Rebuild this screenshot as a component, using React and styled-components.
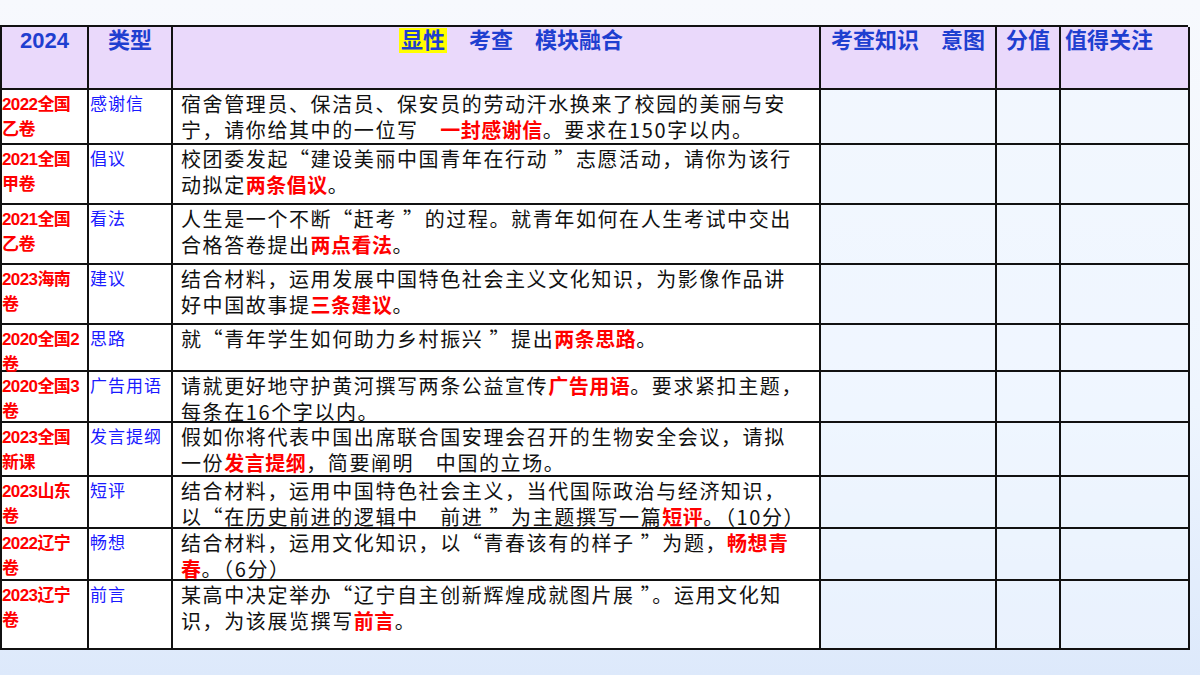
import React from "react";
import styled, { createGlobalStyle } from "styled-components";

const G = createGlobalStyle`
  html,body{margin:0;padding:0;}
  body{width:1200px;height:675px;overflow:hidden;
    background:linear-gradient(180deg,#f7f9fd 0%,#eef5fe 60%,#dde9fb 100%);
    font-family:"Noto Sans CJK SC",sans-serif;}
`;
const Page = styled.div`padding-top:25px;height:650px;`;
const Grid = styled.div`
  display:grid;width:1188px;
  grid-template-columns:87px 84px 648px 176px 64px 129px;
  grid-template-rows:63px 55px 60px 60px 60px 47px 51px 54px 52px 52px 69px;
  border-top:2px solid #111;border-left:2px solid #111;box-sizing:border-box;
  background:rgba(240,247,255,0.6);
`;
const Cell = styled.div`
  border-right:2px solid #111;border-bottom:2px solid #111;box-sizing:border-box;
  overflow:visible;white-space:nowrap;
  background:${p=>p.$head?"#ead9fb":"transparent"};
`;
const H = styled(Cell)`
  color:#1f3fd0;font-weight:bold;font-size:22px;line-height:26px;padding-top:1px;
  font-family:"Liberation Sans","Noto Sans CJK SC",sans-serif;
  text-align:${p=>p.$left?"left":"center"};padding-left:${p=>p.$pl||0}px;
`;
const Year = styled(Cell)`
  color:#f00;font-weight:bold;font-size:17px;line-height:25px;padding-top:2px;
  font-family:"Liberation Sans","Noto Sans CJK SC",sans-serif;letter-spacing:-0.6px;
  background:#fff;
`;
const Type = styled(Cell)`color:#1a1aff;font-size:17px;letter-spacing:1px;line-height:22px;padding:2px 0 0 1px;background:#fff;`;
const Body = styled(Cell)`color:#111;font-size:20px;letter-spacing:1.6px;line-height:26px;padding:1px 0 0 8px;background:#fff;`;
const Em = styled.span`color:#f00;font-weight:bold;letter-spacing:0.5px;`;
const Hl = styled.span`background:#ffff00;color:#1f3fd0;padding:0 2px;`;

const rows=[
 [<>2022全国<br/>乙卷</>,"感谢信",<>宿舍管理员、保洁员、保安员的劳动汗水换来了校园的美丽与安<br/>宁，请你给其中的一位写　<Em>一封感谢信</Em>。要求在150字以内。</>],
 [<>2021全国<br/>甲卷</>,"倡议",<>校团委发起“建设美丽中国青年在行动 ”志愿活动，请你为该行<br/>动拟定<Em>两条倡议</Em>。</>],
 [<>2021全国<br/>乙卷</>,"看法",<>人生是一个不断“赶考 ”的过程。就青年如何在人生考试中交出<br/>合格答卷提出<Em>两点看法</Em>。</>],
 [<>2023海南<br/>卷</>,"建议",<>结合材料，运用发展中国特色社会主义文化知识，为影像作品讲<br/>好中国故事提<Em>三条建议</Em>。</>],
 [<>2020全国2<br/>卷</>,"思路",<>就“青年学生如何助力乡村振兴 ”提出<Em>两条思路</Em>。</>],
 [<>2020全国3<br/>卷</>,"广告用语",<>请就更好地守护黄河撰写两条公益宣传<Em>广告用语</Em>。要求紧扣主题，<br/>每条在16个字以内。</>],
 [<>2023全国<br/>新课</>,"发言提纲",<>假如你将代表中国出席联合国安理会召开的生物安全会议，请拟<br/>一份<Em>发言提纲</Em>，简要阐明　中国的立场。</>],
 [<>2023山东<br/>卷</>,"短评",<>结合材料，运用中国特色社会主义，当代国际政治与经济知识，<br/>以“在历史前进的逻辑中　前进 ”为主题撰写一篇<Em>短评</Em>。（10分）</>],
 [<>2022辽宁<br/>卷</>,"畅想",<>结合材料，运用文化知识，以“青春该有的样子 ”为题，<Em>畅想青</Em><br/><Em>春</Em>。（6分）</>],
 [<>2023辽宁<br/>卷</>,"前言",<>某高中决定举办“辽宁自主创新辉煌成就图片展 ”。运用文化知<br/>识，为该展览撰写<Em>前言</Em>。</>],
];

export default function App(){
  return <Page><G/><Grid>
    <H $head>2024</H>
    <H $head>类型</H>
    <H $head $left $pl={226}><Hl>显性</Hl>　考查　模块融合</H>
    <H $head>考查知识　意图</H>
    <H $head>分值</H>
    <H $head $left $pl={4}>值得关注</H>
    {rows.map((r,i)=><React.Fragment key={i}>
      <Year>{r[0]}</Year><Type>{r[1]}</Type><Body>{r[2]}</Body>
      <Cell/><Cell/><Cell/>
    </React.Fragment>)}
  </Grid></Page>;
}
